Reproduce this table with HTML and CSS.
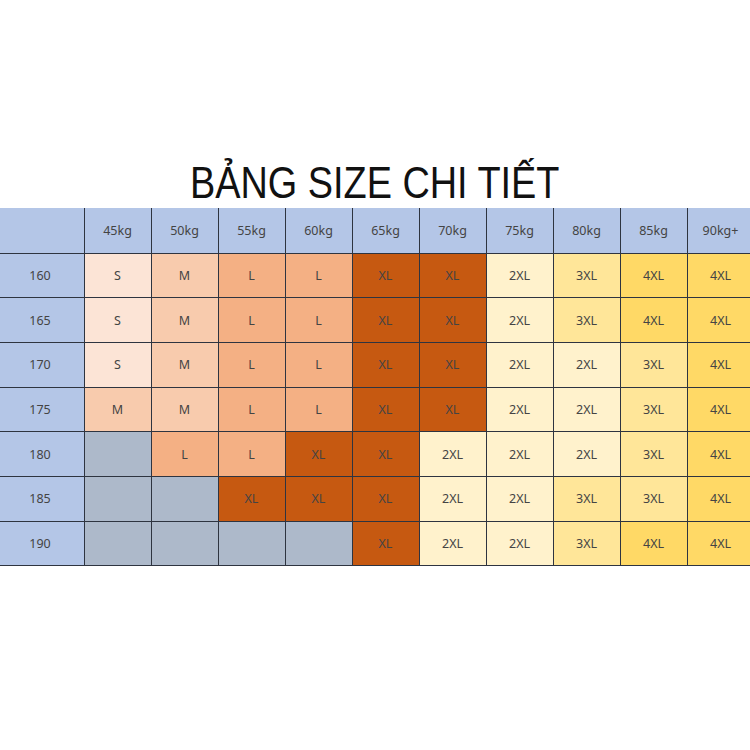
FILE: index.html
```html
<!DOCTYPE html>
<html>
<head>
<meta charset="utf-8">
<link rel="stylesheet" href="styles.css">
</head>
<body>
<div class="page">
  <h1 class="title">BẢNG SIZE CHI TIẾT</h1>
  <table class="sizes">
    <tr class="head"><td class="h"></td><td>45kg</td><td>50kg</td><td>55kg</td><td>60kg</td><td>65kg</td><td>70kg</td><td>75kg</td><td>80kg</td><td>85kg</td><td>90kg+</td></tr>
    <tr><td class="h">160</td><td class="s">S</td><td class="m">M</td><td class="l">L</td><td class="l">L</td><td class="xl">XL</td><td class="xl">XL</td><td class="x2">2XL</td><td class="x3">3XL</td><td class="x4">4XL</td><td class="x4">4XL</td></tr>
    <tr><td class="h">165</td><td class="s">S</td><td class="m">M</td><td class="l">L</td><td class="l">L</td><td class="xl">XL</td><td class="xl">XL</td><td class="x2">2XL</td><td class="x3">3XL</td><td class="x4">4XL</td><td class="x4">4XL</td></tr>
    <tr><td class="h">170</td><td class="s">S</td><td class="m">M</td><td class="l">L</td><td class="l">L</td><td class="xl">XL</td><td class="xl">XL</td><td class="x2">2XL</td><td class="x2">2XL</td><td class="x3">3XL</td><td class="x4">4XL</td></tr>
    <tr><td class="h">175</td><td class="m">M</td><td class="m">M</td><td class="l">L</td><td class="l">L</td><td class="xl">XL</td><td class="xl">XL</td><td class="x2">2XL</td><td class="x2">2XL</td><td class="x3">3XL</td><td class="x4">4XL</td></tr>
    <tr><td class="h">180</td><td class="g"></td><td class="l">L</td><td class="l">L</td><td class="xl">XL</td><td class="xl">XL</td><td class="x2">2XL</td><td class="x2">2XL</td><td class="x2">2XL</td><td class="x3">3XL</td><td class="x4">4XL</td></tr>
    <tr><td class="h">185</td><td class="g"></td><td class="g"></td><td class="xl">XL</td><td class="xl">XL</td><td class="xl">XL</td><td class="x2">2XL</td><td class="x2">2XL</td><td class="x3">3XL</td><td class="x3">3XL</td><td class="x4">4XL</td></tr>
    <tr><td class="h">190</td><td class="g"></td><td class="g"></td><td class="g"></td><td class="g"></td><td class="xl">XL</td><td class="x2">2XL</td><td class="x2">2XL</td><td class="x3">3XL</td><td class="x4">4XL</td><td class="x4">4XL</td></tr>
  </table>
</div>
</body>
</html>
```

FILE: styles.css
```css
html, body {
  margin: 0;
  padding: 0;
  background: #fff;
}
.page {
  width: 750px;
  height: 750px;
  display: flex;
  flex-direction: column;
  align-items: center;
}
.title {
  margin: 158px 0 0 0;
  height: 50px;
  font-family: "Liberation Sans", Arial, sans-serif;
  font-weight: normal;
  font-size: 44px;
  line-height: 46px;
  padding-top: 2px;
  box-sizing: border-box;
  color: #111;
  transform: scaleX(0.86);
  white-space: nowrap;
}
.sizes {
  width: 750px;
  border-collapse: collapse;
  table-layout: fixed;
  font-family: "Noto Sans", "Liberation Sans", sans-serif;
  font-size: 12.5px;
  color: #444;
}
.sizes td {
  height: 43.7px;
  padding: 0;
  text-align: center;
  border: 1.5px solid #2e3440;
  width: 66px;
}
.sizes tr:first-child td {
  border-top: none;
  height: 44.5px;
}
.sizes td:first-child {
  border-left: none;
  width: 87px;
}
.sizes td:last-child {
  border-right: none;
}
.sizes .head td, .sizes td.h {
  background: #b4c6e7;
}
.s { background: #fce4d6; }
.m { background: #f8cbad; }
.l { background: #f4b084; }
.xl { background: #c65911; }
.x2 { background: #fff2cc; }
.x3 { background: #ffe699; }
.x4 { background: #ffd966; }
.g { background: #adb9ca; }
```
